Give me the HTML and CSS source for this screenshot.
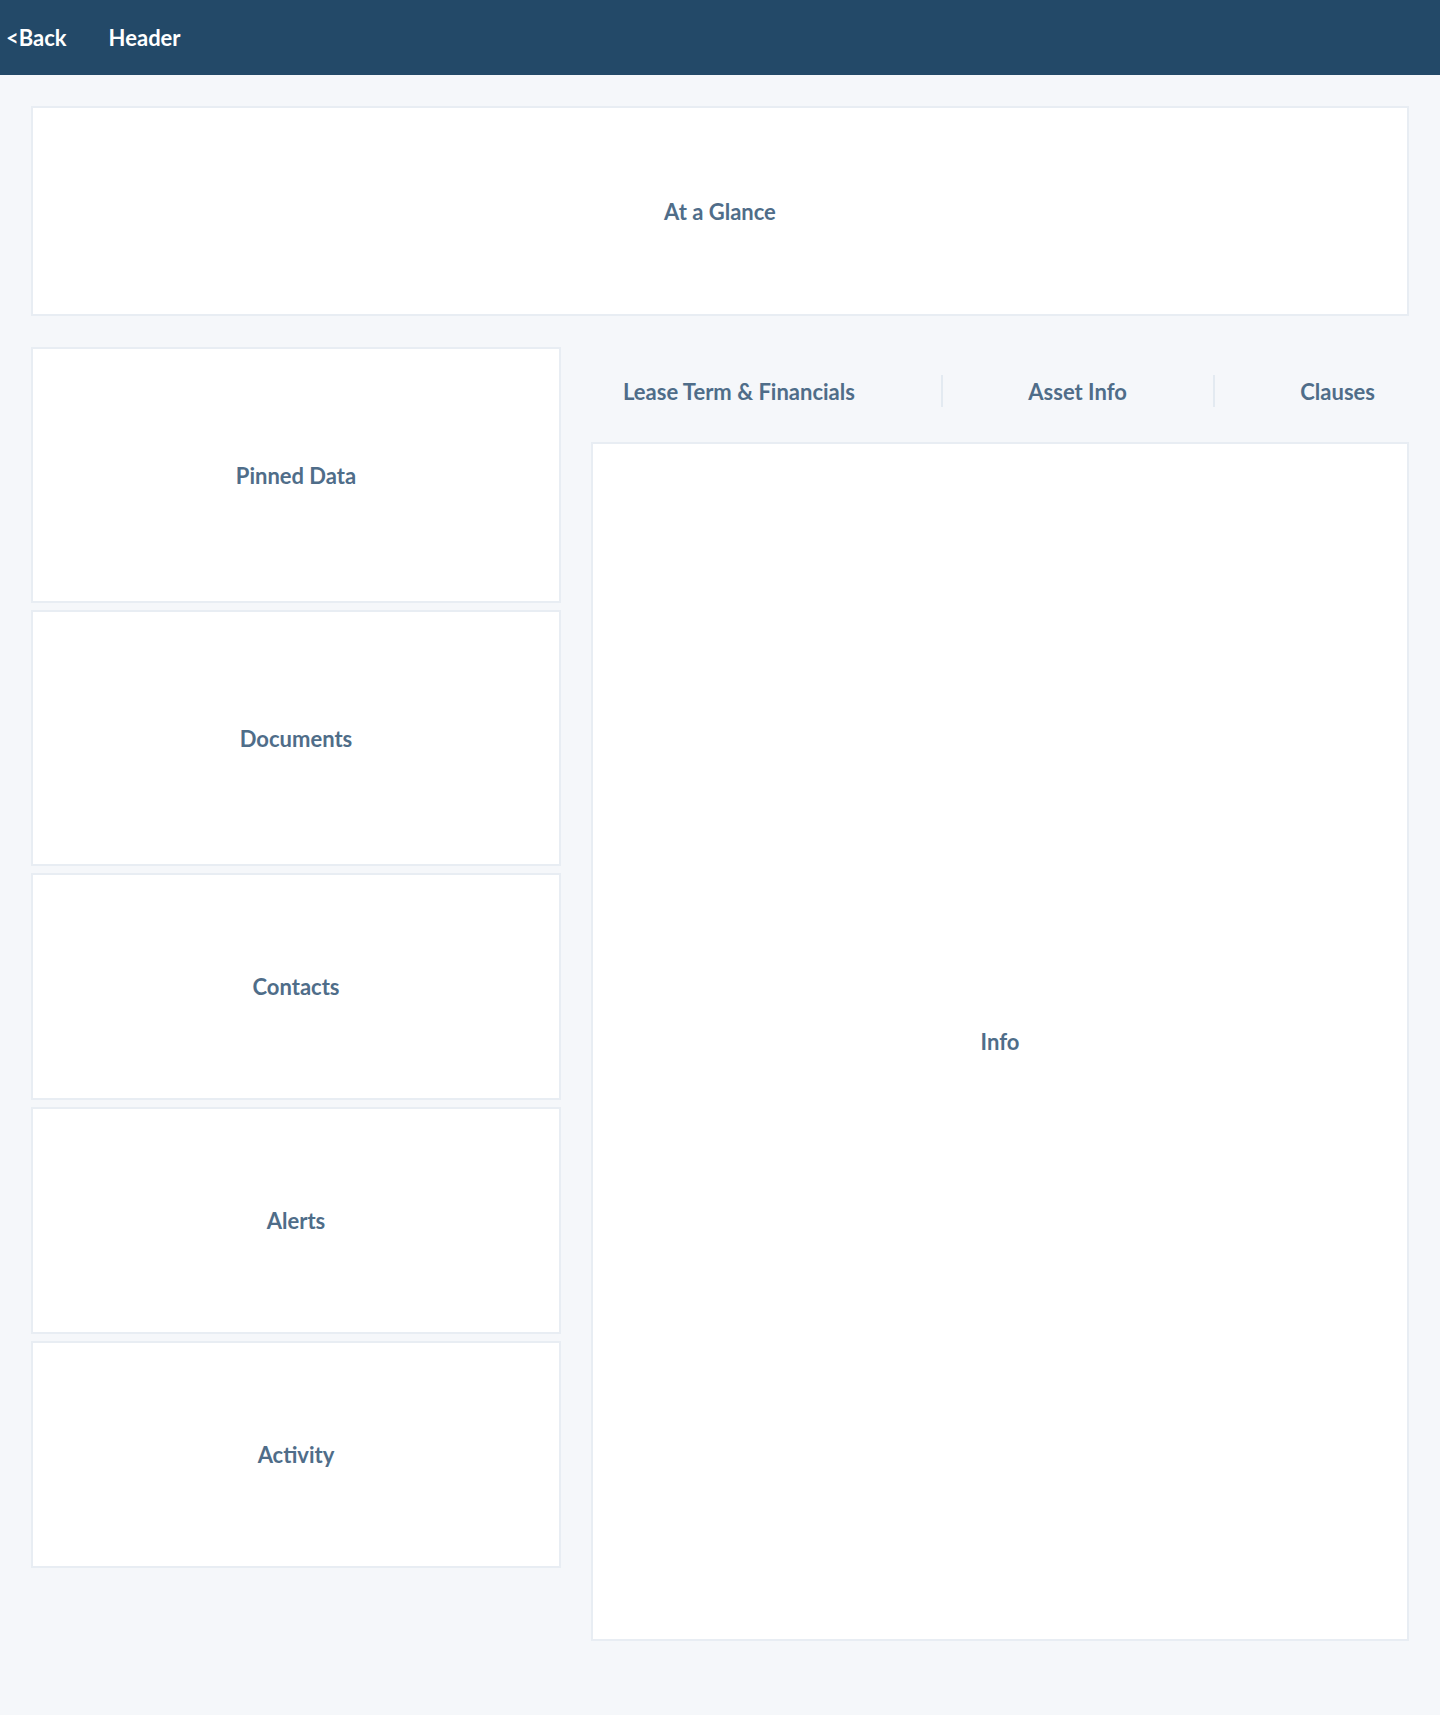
FILE: index.html
```html
<!DOCTYPE html>
<html>
<head lang="en">
    <meta charset="UTF-8">
    <title>Lease Detail</title>
    <link rel="stylesheet" href="styles.css">
</head>
<body>
    <div id="topbar">
        <a class="back-link" href="#">&lt;Back</a>
        <span class="page-title">Header</span>
    </div>
    <div id="main">
        <div class="panel" id="glance">At a Glance</div>
        <div id="columns">
            <div id="side">
                <div class="panel tall">Pinned Data</div>
                <div class="panel tall">Documents</div>
                <div class="panel short">Contacts</div>
                <div class="panel short">Alerts</div>
                <div class="panel short">Activity</div>
            </div>
            <div id="detail">
                <div id="tabs">
                    <span class="tab">Lease Term &amp; Financials</span>
                    <span class="tab-divider"></span>
                    <span class="tab">Asset Info</span>
                    <span class="tab-divider"></span>
                    <span class="tab">Clauses</span>
                </div>
                <div class="panel" id="info">Info</div>
            </div>
        </div>
    </div>
</body>
</html>
```

FILE: styles.css
```css
body, html {
    border: 0;
    padding: 0;
    margin: 0;
    font-family: Lato, "Liberation Sans", sans-serif;
    background-color: #f5f7fa;
}

#topbar {
    display: flex;
    align-items: center;
    height: 75px;
    padding-left: 6px;
    background-color: #234968;
    color: white;
    font-size: 22px;
    font-weight: bold;
}

.back-link {
    color: white;
    text-decoration: none;
    margin-right: 42px;
}

#main {
    padding: 31px 31px 74px 31px;
}

.panel {
    display: flex;
    align-items: center;
    justify-content: center;
    box-sizing: border-box;
    background-color: white;
    border: 2px solid #e8edf3;
    color: #4f6d89;
    font-size: 22px;
    font-weight: bold;
}

#glance {
    height: 210px;
}

#columns {
    display: grid;
    grid-template-columns: 530px 818px;
    gap: 30px;
    margin-top: 31px;
}

#side {
    display: flex;
    flex-direction: column;
    gap: 7px;
}

.tall {
    height: 256px;
}

.short {
    height: 227px;
}

#detail {
    display: flex;
    flex-direction: column;
    gap: 7px;
}

#tabs {
    display: flex;
    align-items: center;
    justify-content: space-between;
    height: 88px;
    padding: 0 34px 0 32px;
    color: #4f6d89;
    font-size: 22px;
    font-weight: bold;
}

.tab-divider {
    width: 2px;
    height: 32px;
    background-color: #e3eaf1;
}

#info {
    height: 1199px;
}
```
